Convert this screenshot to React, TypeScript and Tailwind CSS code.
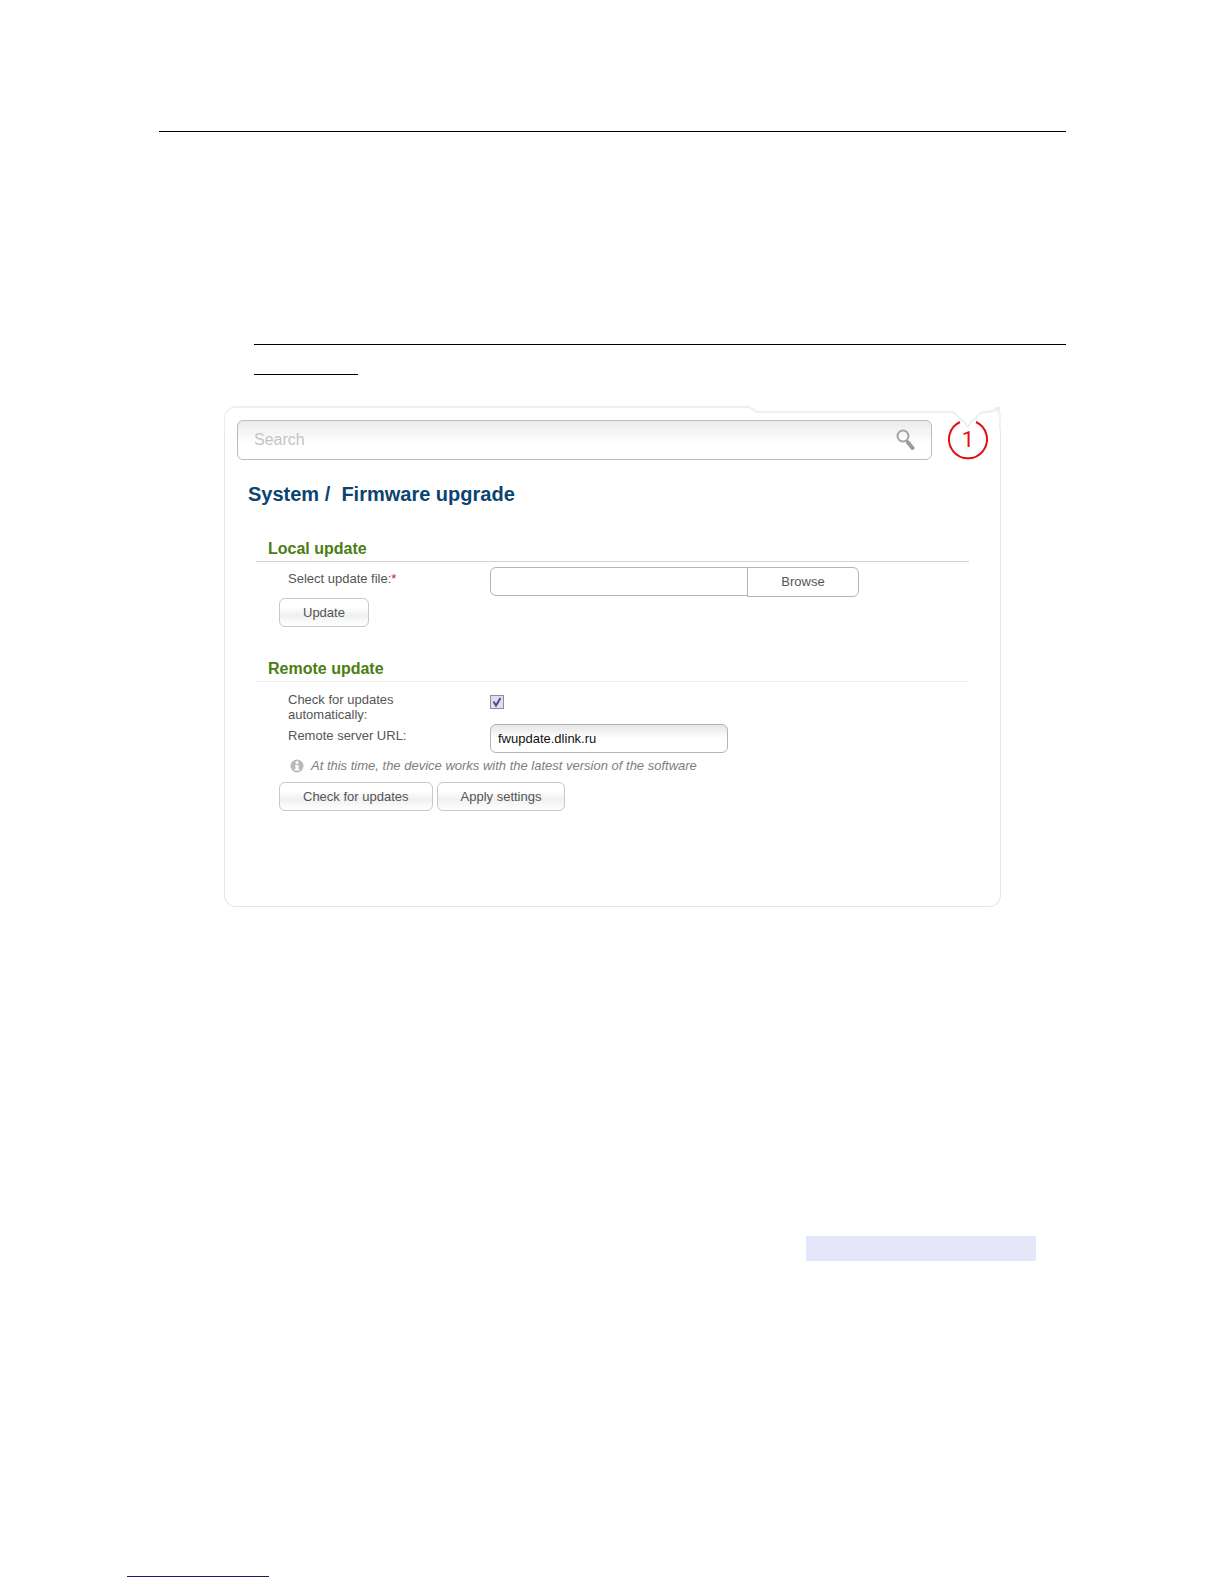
import React, { useState } from 'react';

interface SectionProps {
  title: string;
  lineColor: string;
  className?: string;
  children: React.ReactNode;
}

interface PanelButtonProps {
  children: React.ReactNode;
  onClick?: () => void;
}

const labelClass = 'w-[202px] shrink-0 text-[13px] leading-[15px] text-[#555555]';

const PanelButton: React.FC<PanelButtonProps> = ({ children, onClick }) => (
  <button
    type="button"
    onClick={onClick}
    className="h-[29px] rounded-md border border-[#c8c8c8] bg-linear-to-b from-white from-30% via-[#f0f0f0] via-60% to-white px-[23px] text-[13px] whitespace-nowrap text-[#555555]"
  >
    {children}
  </button>
);

const Section: React.FC<SectionProps> = ({ title, lineColor, className = '', children }) => (
  <section className={`ml-8 mr-8 ${className}`}>
    <h2 className={`border-b pb-0.5 pl-3 text-base leading-5 font-bold text-[#4c7d14] ${lineColor}`}>
      {title}
    </h2>
    {children}
  </section>
);

// Panel outline: the top edge steps down on the right and dips above the badge
const PanelFrame = () => (
  <div className="pointer-events-none absolute inset-0 flex flex-col">
    <div className="flex h-6">
      <div className="h-full flex-1 rounded-tl-[12px] border-t-2 border-l border-[#e9f0f2]" />
      <svg width="252" height="24" viewBox="0 0 252 24" fill="none" stroke="#e9f0f2" strokeWidth="2">
        <path d="M0 1 L7 5.5 Q8 6 10 6 H201 Q206 6 209 11 Q214 14 219 21 Q222 15 227 12 Q229 7 236 6 L244 5 Q247 3 250 2" />
        <path d="M245 1 L251 1 V6 Z" fill="#e9f0f2" stroke="none" />
        <path d="M246 2 L251 8 V24" strokeWidth="1.5" />
      </svg>
    </div>
    <div className="flex-1 rounded-b-[12px] border-x border-b border-[#e4e6e8]" />
  </div>
);

const SearchIcon = () => (
  <svg width="20" height="23" viewBox="0 0 20 23" fill="none" aria-hidden="true">
    <circle cx="8" cy="7" r="5.5" stroke="#a3a3a3" strokeWidth="2" />
    <path d="M11.5 11 L13 13" stroke="#a3a3a3" strokeWidth="2" />
    <path d="M13 13.5 L17.5 19" stroke="#9b9b9b" strokeWidth="4" strokeLinecap="round" />
  </svg>
);

const NoticeBadge = () => (
  <div className="relative flex h-10 w-10 items-center justify-center font-[Roboto,sans-serif] text-[22px] leading-none text-[#e01010]">
    <svg className="absolute inset-0" width="40" height="40" viewBox="0 0 40 40" fill="none">
      <path d="M12 2 A19 19 0 1 0 28 2" stroke="#e01010" strokeWidth="2" />
    </svg>
    1
  </div>
);

const InfoIcon = () => (
  <svg width="14" height="14" viewBox="0 0 14 14" aria-hidden="true">
    <circle cx="7" cy="7" r="6.5" fill="#b9b9b9" />
    <circle cx="7" cy="3.5" r="1.5" fill="#ffffff" />
    <path d="M5 6 H8.5 V10 H9.5 V11.5 H4.5 V10 H5.5 V7 H5 Z" fill="#ffffff" />
  </svg>
);

const FirmwareUpgrade = () => {
  const [autoCheck, setAutoCheck] = useState(true);
  const [serverUrl, setServerUrl] = useState('fwupdate.dlink.ru');
  const [updateFile, setUpdateFile] = useState('');

  return (
    <div className="relative ml-[65px] mr-[65px] mt-[31px] pb-24">
      <PanelFrame />

      <div className="flex gap-4 pt-3.5 pl-[13px] pr-[13px]">
        <div className="flex h-10 flex-1 items-center rounded-md border border-[#bcbcbc] bg-linear-to-b from-[#ebebeb] to-white to-60% pr-4 pl-4">
          <input
            type="search"
            placeholder="Search"
            aria-label="Search"
            className="min-w-0 flex-1 bg-transparent text-base outline-none placeholder:text-[#c4c4c4]"
          />
          <button type="button" aria-label="Run search">
            <SearchIcon />
          </button>
        </div>
        <NoticeBadge />
      </div>

      <h1 className="mt-5 ml-6 text-xl leading-7 font-bold whitespace-pre text-[#0b4470]">
        {'System /  Firmware upgrade'}
      </h1>

      <Section title="Local update" lineColor="border-[#d2d2d2]" className="mt-[31px]">
        <div className="flex pt-[5px] pl-8">
          <label htmlFor="update-file" className={`${labelClass} pt-1`}>
            Select update file:<span className="text-[#e01010]">*</span>
          </label>
          <input
            id="update-file"
            type="text"
            value={updateFile}
            onChange={(e) => setUpdateFile(e.target.value)}
            className="h-[29px] w-[258px] rounded-l-md border border-[#b4b4b4] bg-white px-2 text-[13px] outline-none"
          />
          <button
            type="button"
            className="-ml-px h-[30px] w-[112px] rounded-r-md border border-[#b4b4b4] bg-white text-[13px] text-[#555555]"
          >
            Browse
          </button>
        </div>
        <div className="flex pt-px pl-[23px]">
          <PanelButton>Update</PanelButton>
        </div>
      </Section>

      <Section title="Remote update" lineColor="border-[#ececec]" className="mt-8">
        <div className="flex pt-2.5 pl-8">
          <label htmlFor="auto-check" className={labelClass}>
            Check for updates
            <br />
            automatically:
          </label>
          <div className="mt-[3px] grid h-3.5 w-3.5 border border-[#8f8f95]">
            <input
              id="auto-check"
              type="checkbox"
              checked={autoCheck}
              onChange={(e) => setAutoCheck(e.target.checked)}
              className="col-start-1 row-start-1 h-3 w-3 appearance-none bg-[#dfe0ea]"
            />
            {autoCheck && (
              <svg
                className="pointer-events-none col-start-1 row-start-1"
                width="12"
                height="12"
                viewBox="0 0 12 12"
                fill="none"
              >
                <path d="M2.5 5.5 L5 9.5 L9.5 2" stroke="#4c4a94" strokeWidth="2" />
              </svg>
            )}
          </div>
        </div>
        <div className="flex pt-0.5 pl-8">
          <label htmlFor="server-url" className={`${labelClass} pt-1`}>
            Remote server URL:
          </label>
          <input
            id="server-url"
            type="text"
            value={serverUrl}
            onChange={(e) => setServerUrl(e.target.value)}
            className="h-[29px] w-[238px] rounded-md border border-[#b4b4b4] bg-linear-to-b from-[#e6e6e6] to-white to-50% px-[7px] text-[13px] text-[#111111] outline-none"
          />
        </div>
        <p className="flex items-center gap-[7px] pt-1 pl-[34px] text-[13px] leading-[18px] text-[#7d7d7d] italic">
          <InfoIcon />
          At this time, the device works with the latest version of the software
        </p>
        <div className="flex gap-1 pt-[7px] pl-[23px]">
          <PanelButton>Check for updates</PanelButton>
          <PanelButton>Apply settings</PanelButton>
        </div>
      </Section>
    </div>
  );
};

const App = () => (
  <div className="bg-white pt-[131px] pb-2 font-['Liberation_Sans',Arial,sans-serif]">
    <main className="mr-[158px] ml-[159px]">
      <hr className="border-black" />
      <div className="ml-[95px] pt-[212px]">
        <hr className="border-black" />
        <hr className="mt-[29px] w-[104px] border-black" />
      </div>
      <FirmwareUpgrade />
      <div className="mt-[329px] mr-[30px] flex justify-end">
        <div className="h-[25px] w-[230px] bg-[#e6e6fa]" />
      </div>
    </main>
    <footer className="mt-[315px] ml-[127px]">
      <hr className="w-[142px] border-[#1a1a80]" />
    </footer>
  </div>
);

export default App;
